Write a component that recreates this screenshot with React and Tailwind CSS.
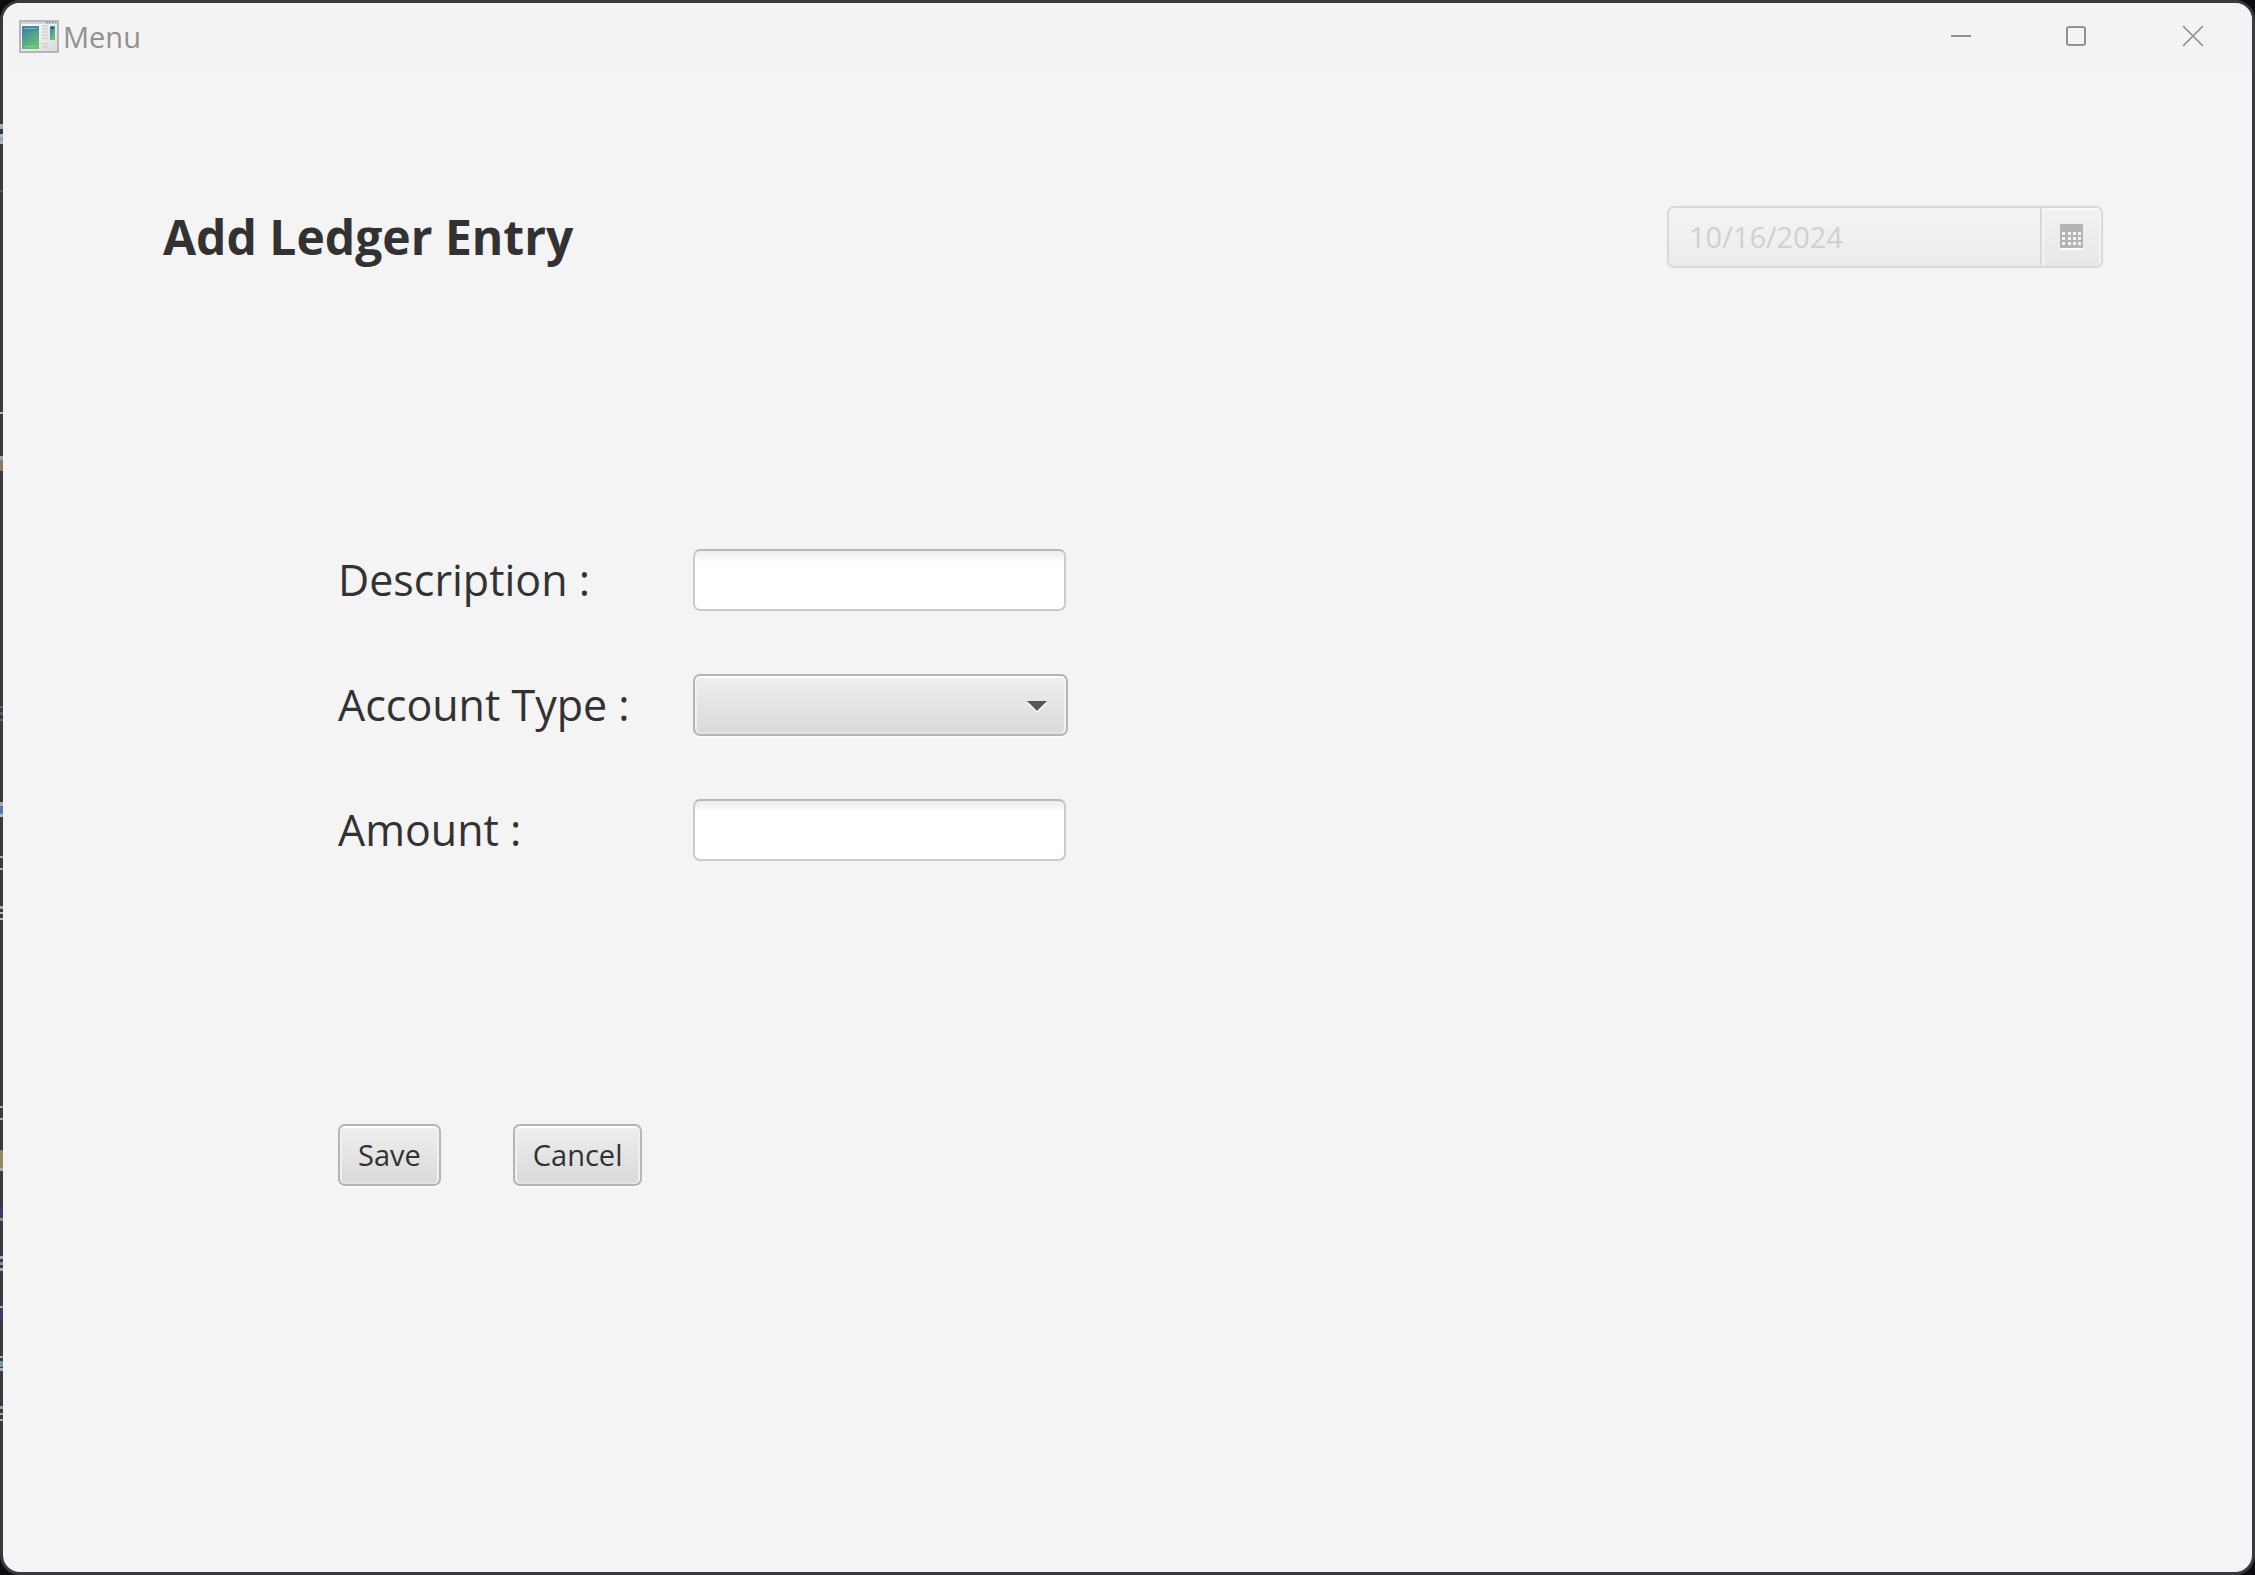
const font = "font-['Open_Sans','Noto_Sans',sans-serif]";

const buttonFace =
  "rounded-[7px] border-2 border-[#b5b5b5] bg-linear-to-b from-[#efefef] to-[#d9d9d9] shadow-[inset_0_2px_0_#fdfdfd,inset_2px_0_0_#f0f0f0,inset_-2px_0_0_#f0f0f0,inset_0_-2px_0_#e2e2e2,0_2px_0_#fcfcfc]";

const fieldFace =
  "h-[62px] w-[373px] rounded-[7px] border-2 border-[#cbcbcb] border-t-[#b9b9b9] bg-linear-to-b from-[#ececec] to-white to-[12px] px-4 text-[29px] outline-none";

const edgeMarks = [
  { top: 124, height: 2, color: "#b9b0a4" },
  { top: 126, height: 3, color: "#8db4c8" },
  { top: 134, height: 3, color: "#b8b9c0" },
  { top: 137, height: 4, color: "#8fa9c0" },
  { top: 141, height: 3, color: "#b8b9c0" },
  { top: 190, height: 2, color: "#55555b" },
  { top: 412, height: 2, color: "#b8b9c0" },
  { top: 456, height: 4, color: "#8fa9b0" },
  { top: 460, height: 11, color: "#8a7860" },
  { top: 706, height: 2, color: "#66666c" },
  { top: 712, height: 3, color: "#55606a" },
  { top: 719, height: 2, color: "#66666c" },
  { top: 802, height: 4, color: "#a9aab0" },
  { top: 806, height: 8, color: "#5578a8" },
  { top: 814, height: 3, color: "#b8b9c0" },
  { top: 856, height: 2, color: "#a9aab0" },
  { top: 868, height: 2, color: "#a9aab0" },
  { top: 906, height: 3, color: "#a9aab0" },
  { top: 912, height: 2, color: "#b8b9c0" },
  { top: 918, height: 2, color: "#b8b9c0" },
  { top: 1106, height: 2, color: "#a9aab0" },
  { top: 1118, height: 2, color: "#a9aab0" },
  { top: 1150, height: 18, color: "#918a60" },
  { top: 1168, height: 3, color: "#a9aab0" },
  { top: 1206, height: 12, color: "#3c3a68" },
  { top: 1218, height: 3, color: "#9a8a7a" },
  { top: 1256, height: 3, color: "#a9aab0" },
  { top: 1262, height: 3, color: "#6a9ab0" },
  { top: 1268, height: 3, color: "#a9aab0" },
  { top: 1306, height: 2, color: "#a9aab0" },
  { top: 1308, height: 13, color: "#3c3a68" },
  { top: 1356, height: 2, color: "#a9aab0" },
  { top: 1361, height: 6, color: "#6a9ab0" },
  { top: 1368, height: 3, color: "#a9aab0" },
  { top: 1406, height: 3, color: "#8aa0b0" },
  { top: 1413, height: 2, color: "#a9aab0" },
  { top: 1419, height: 2, color: "#a9aab0" },
];

function AppIcon() {
  return (
    <svg width="40" height="34" viewBox="0 0 40 34" aria-hidden="true">
      <defs>
        <linearGradient id="pane" x1="0" y1="0" x2="0.5" y2="1">
          <stop offset="0" stopColor="#4a86ae" />
          <stop offset="0.45" stopColor="#4a9c98" />
          <stop offset="1" stopColor="#6cc06c" />
        </linearGradient>
        <linearGradient id="sheet" x1="0" y1="0" x2="1" y2="1">
          <stop offset="0" stopColor="#ffffff" />
          <stop offset="1" stopColor="#d8dadb" />
        </linearGradient>
      </defs>
      <rect x="1" y="1" width="38" height="31" fill="url(#sheet)" stroke="#a2a8b0" strokeWidth="1.6" />
      <rect x="2" y="2" width="36" height="2" fill="#ccd5e2" />
      <path d="M27 2.5h10" stroke="#8d949e" strokeWidth="1.4" strokeDasharray="2 1" />
      <rect x="3" y="6" width="17" height="23" fill="url(#pane)" />
      <path d="M3 15C8 11 15 11 20 10V6H3Z" fill="#3f78a8" opacity="0.35" />
      <path d="M5 8.5h13M5 26.5h13" stroke="#a5d3bf" strokeWidth="0.8" opacity="0.7" />
      <path d="M23 6h6M23 9h6M23 12h6M23 15h6M23 18h6M23 24h6M23 27h6" stroke="#cfcfcf" strokeWidth="1.3" />
      <rect x="31" y="6" width="5" height="14" fill="url(#pane)" />
      <path d="M32 8h3" stroke="#2c5f92" strokeWidth="2" />
    </svg>
  );
}

function WindowButton({ label, children }) {
  return (
    <button type="button" aria-label={label} className="flex h-full w-29 items-center justify-center text-[#919191]">
      <svg width="22" height="22" viewBox="0 0 22 22" fill="none" stroke="currentColor" strokeWidth="2" aria-hidden="true">
        {children}
      </svg>
    </button>
  );
}

function CalendarIcon() {
  const cols = [2, 8, 13, 18];
  const rows = [8, 13, 18];
  return (
    <svg width="23" height="26" viewBox="0 0 23 26" shapeRendering="crispEdges" aria-hidden="true">
      <rect y="2" width="23" height="24" fill="#fdfdfd" />
      <rect width="23" height="24" fill="#b4b4b4" />
      {rows.map((y) => cols.map((x) => <rect key={x + "-" + y} x={x} y={y} width="3" height="3" fill="#f3f3f3" />))}
    </svg>
  );
}

export default function App() {
  return (
    <div className={"relative flex min-h-screen bg-[#0b0b10] text-[#323232] " + font}>
      <div className="flex flex-1 flex-col overflow-hidden rounded-[20px] border-3 border-[#39393e] bg-[#f4f4f4]">
        <header className="flex h-[69px] items-start justify-between bg-[#f3f3f3] text-[#919191]">
          <div className="flex h-[68px] items-center gap-1 pl-4">
            <AppIcon />
            <span className="text-[29px] leading-9">Menu</span>
          </div>
          <div className="flex h-[66px] pr-px">
            <WindowButton label="Minimize">
              <path d="M1 11h20" />
            </WindowButton>
            <WindowButton label="Maximize">
              <rect x="1" y="2" width="18" height="18" rx="2" />
            </WindowButton>
            <WindowButton label="Close">
              <path d="M1 1l20 20M21 1L1 21" strokeWidth="1.7" />
            </WindowButton>
          </div>
        </header>

        <main className="flex-1 pt-[133px] pr-[149px] pl-40">
          <div className="flex items-center justify-between">
            <h1 className="text-[48px] leading-16 font-bold">Add Ledger Entry</h1>
            <div className="flex h-[62px] w-109 overflow-hidden rounded-[7px] border-2 border-[#d9d9d9] bg-linear-to-b from-[#f4f4f4] to-[#ececec]">
              <input
                aria-label="Date"
                disabled
                defaultValue="10/16/2024"
                className="min-w-0 flex-1 bg-transparent pl-5 text-[29px] text-[#d0d0d0]"
              />
              <button
                type="button"
                disabled
                aria-label="Choose date"
                className="flex w-[61px] items-center justify-center border-l-2 border-[#d9d9d9] bg-linear-to-b from-[#f2f2f2] to-[#e8e8e8] shadow-[inset_0_2px_0_#f9f9f9,inset_2px_0_0_#f4f4f4,inset_-2px_0_0_#f4f4f4]"
              >
                <CalendarIcon />
              </button>
            </div>
          </div>

          <form className="pt-70 pl-[175px]" onSubmit={(e) => e.preventDefault()}>
            <div className="grid grid-cols-[355px_375px] items-center gap-y-[63px] text-[43px] leading-[62px]">
              <label htmlFor="description">Description :</label>
              <input id="description" type="text" className={fieldFace} />
              <label htmlFor="account">Account Type :</label>
              <div className="relative">
                <select id="account" className={"block h-[62px] w-full appearance-none px-4 text-[29px] " + buttonFace}>
                  <option value=""></option>
                </select>
                <svg className="pointer-events-none absolute top-6 right-5" width="22" height="16" viewBox="0 0 22 16" aria-hidden="true">
                  <path d="M1 5h20L11 15Z" fill="#fbfbfb" />
                  <path d="M1 3h20L11 13Z" fill="#575757" />
                </svg>
              </div>
              <label htmlFor="amount">Amount :</label>
              <input id="amount" type="text" className={fieldFace} />
            </div>
            <div className="flex gap-18 pt-[263px] text-[29px]">
              <button type="submit" className={"h-[62px] px-4.5 " + buttonFace}>Save</button>
              <button type="button" className={"h-[62px] px-4.5 " + buttonFace}>Cancel</button>
            </div>
          </form>
        </main>
      </div>
      <svg className="pointer-events-none absolute top-0 left-0" width="3" height="1575" aria-hidden="true">
        {edgeMarks.map((m) => (
          <rect key={m.top} y={m.top} width="3" height={m.height} fill={m.color} />
        ))}
      </svg>
    </div>
  );
}
